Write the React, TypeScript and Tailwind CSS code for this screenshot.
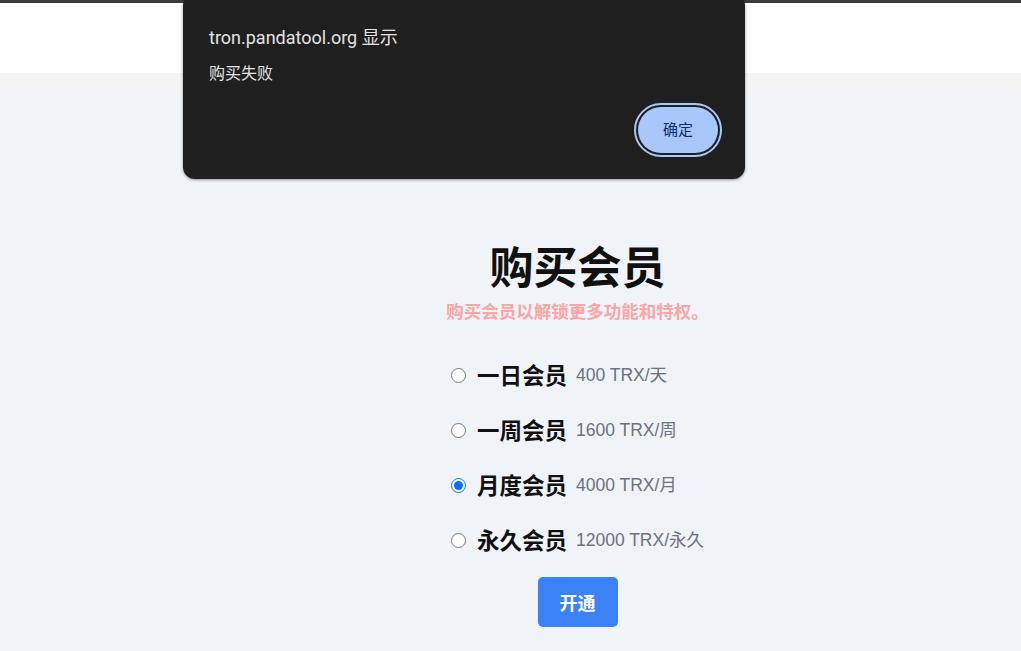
import { useState } from 'react'

const plans = [
  { id: 'day', name: '一日会员', price: '400 TRX/天' },
  { id: 'week', name: '一周会员', price: '1600 TRX/周' },
  { id: 'month', name: '月度会员', price: '4000 TRX/月' },
  { id: 'forever', name: '永久会员', price: '12000 TRX/永久' },
]

export default function App() {
  const [selected, setSelected] = useState('month')

  return (
    <div className="relative min-h-[651px] w-full overflow-hidden bg-[#f0f3f8] font-['Liberation_Sans','Noto_Sans_CJK_SC',sans-serif]">
      <div className="h-[3px] bg-[#3b3b3b]" />
      <header className="h-[70px] bg-white" />
      <div className="h-[20px] bg-[#f3f3f3]" />

      <main className="flex flex-col items-center pl-[134px] pt-[146px]">
        <h1 className="text-[44px] font-bold leading-[52px] text-[#111] font-['Noto_Sans_CJK_SC',sans-serif]">
          购买会员
        </h1>
        <p className="mt-[8px] text-[17.5px] font-bold leading-6 text-[#fca5a5] font-['Noto_Sans_CJK_SC',sans-serif]">
          购买会员以解锁更多功能和特权。
        </p>

        <div className="mt-[36px] flex flex-col gap-[23px]">
          {plans.map((p) => (
            <label key={p.id} className="flex h-8 cursor-pointer items-center">
              <input
                type="radio"
                name="plan"
                checked={selected === p.id}
                onChange={() => setSelected(p.id)}
                className="m-0 h-[15px] w-[15px] accent-[#0b6ff7]"
              />
              <span className="ml-[11px] text-[22.5px] font-bold text-[#111] font-['Noto_Sans_CJK_SC',sans-serif]">
                {p.name}
              </span>
              <span className="ml-[9px] text-[17.5px] text-[#6b7280]">{p.price}</span>
            </label>
          ))}
        </div>

        <button className="mt-[21px] h-[50px] w-[80px] rounded-[5px] bg-[#3b82f6] text-lg font-bold text-white font-['Noto_Sans_CJK_SC',sans-serif]">
          开通
        </button>
      </main>

      {/* browser alert */}
      <div className="absolute left-[183px] top-[-6px] h-[185px] w-[562px] rounded-[12px] bg-[#1f1f1f] shadow-[0_1px_3px_rgba(0,0,0,0.4)] font-['Roboto','Noto_Sans_CJK_SC',sans-serif]">
        <div className="px-[26px] pt-[32px]">
          <div className="text-[18px] leading-6 text-[#e3e3e3]">tron.pandatool.org 显示</div>
          <div className="mt-[12px] text-base leading-6 text-[#e3e3e3]">购买失败</div>
        </div>
        <div className="absolute right-[23px] top-[109px] rounded-full border-2 border-[#a8c7fa] p-[2px]">
          <button className="h-[46px] w-[80px] rounded-full bg-[#a8c7fa] text-[15px] text-[#062e6f]">
            确定
          </button>
        </div>
      </div>
    </div>
  )
}
